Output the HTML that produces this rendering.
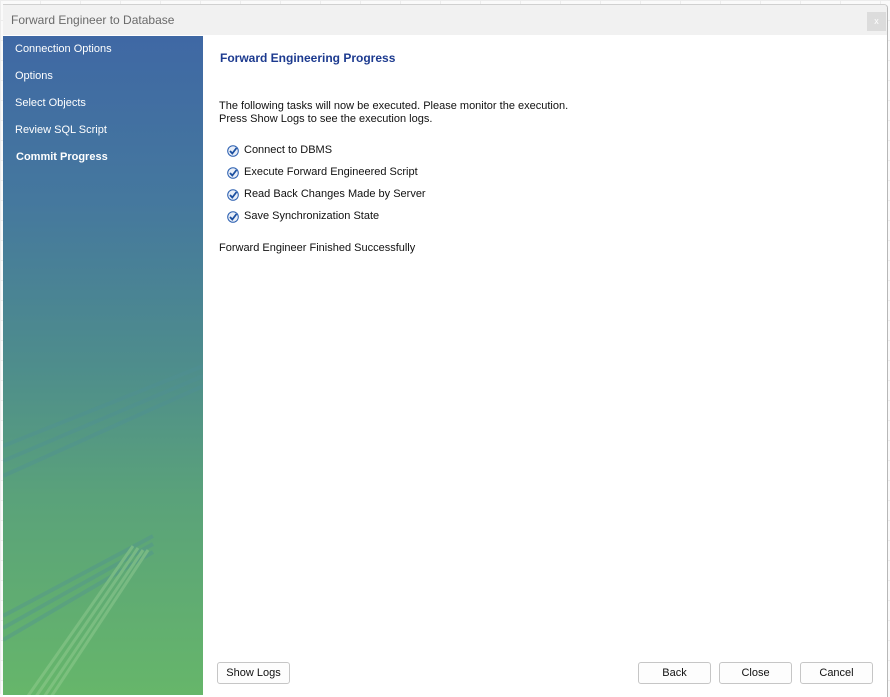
<!DOCTYPE html>
<html><head><style>
body{margin:0;width:890px;height:694px;overflow:hidden;background:#fafafa;font-family:"Liberation Sans",Tahoma,sans-serif;font-size:11px;position:relative}
.grid{position:absolute;inset:0;background-image:linear-gradient(#ececec 1px,transparent 1px),linear-gradient(90deg,#ececec 1px,transparent 1px);background-size:40px 20px}
.win{position:absolute;left:3px;top:4px;width:884px;height:692px;background:#fff;border-right:1px solid #b8b8b8;border-top:1px solid #d0d0d0;border-radius:0 4px 0 0;overflow:hidden}
.title{height:30px;background:#f1f1f1;color:#6a6a6a;font-size:12px;line-height:31px;padding-left:8px}
.x{position:absolute;right:1px;top:7px;width:19px;height:19px;background:#dcdcdc;color:#fff;font-size:9px;text-align:center;line-height:19px}
.side{position:absolute;left:0;top:31px;width:200px;height:659px;background:linear-gradient(180deg,#3f68a4 0%,#45789e 25%,#4e8d8c 50%,#5aa27a 70%,#66b66a 100%)}
.side div{color:#fff;position:absolute;left:12px;font-size:11px}
.main{position:absolute;left:200px;top:31px;right:0;bottom:0}
h1{position:absolute;left:17px;top:15px;margin:0;font-size:12px;color:#1c3a8f;font-weight:bold}
.t{position:absolute;left:16px;color:#111;font-size:11px}
.ck{position:absolute;left:24px;width:12px;height:12px}
.btn{position:absolute;top:626px;width:71px;height:20px;border:1px solid #c6c6c6;border-radius:3px;background:#fdfdfd;text-align:center;line-height:20px;color:#111}
</style></head><body>
<div class="grid"></div>
<div class="win">
<div class="title">Forward Engineer to Database</div>
<div class="x">x</div>
<div class="side">
<div style="top:7px">Connection Options</div>
<div style="top:34px">Options</div>
<div style="top:61px">Select Objects</div>
<div style="top:88px">Review SQL Script</div>
<div style="top:115px;font-weight:bold;left:13px">Commit Progress</div>
<svg width="200" height="659" style="position:absolute;left:0;top:0;opacity:.35">
<g stroke="#4f8f98" stroke-width="4" fill="none">
<path d="M0 410 L200 330"/><path d="M0 425 L200 340"/><path d="M0 440 L200 350"/>
<path d="M0 580 L150 500"/><path d="M0 592 L150 508"/><path d="M0 604 L150 516"/>
</g>
<g stroke="#a8d8a0" stroke-width="3" fill="none">
<path d="M25 660 L130 510"/><path d="M32 662 L135 512"/><path d="M39 664 L140 514"/><path d="M46 664 L145 514"/>
</g></svg>
</div>
<div class="main">
<h1>Forward Engineering Progress</h1>
<div class="t" style="top:64px">The following tasks will now be executed. Please monitor the execution.</div>
<div class="t" style="top:77px">Press Show Logs to see the execution logs.</div>
<svg class="ck" style="top:109px" viewBox="0 0 12 12"><circle cx="6" cy="6" r="5.3" fill="#e8eef8" stroke="#2b5fb0"/><path d="M3 6 L5.3 8.5 L9.5 3" stroke="#1b4fa0" stroke-width="1.8" fill="none"/></svg>
<div class="t" style="top:108px;left:41px">Connect to DBMS</div>
<svg class="ck" style="top:131px" viewBox="0 0 12 12"><circle cx="6" cy="6" r="5.3" fill="#e8eef8" stroke="#2b5fb0"/><path d="M3 6 L5.3 8.5 L9.5 3" stroke="#1b4fa0" stroke-width="1.8" fill="none"/></svg>
<div class="t" style="top:130px;left:41px">Execute Forward Engineered Script</div>
<svg class="ck" style="top:153px" viewBox="0 0 12 12"><circle cx="6" cy="6" r="5.3" fill="#e8eef8" stroke="#2b5fb0"/><path d="M3 6 L5.3 8.5 L9.5 3" stroke="#1b4fa0" stroke-width="1.8" fill="none"/></svg>
<div class="t" style="top:152px;left:41px">Read Back Changes Made by Server</div>
<svg class="ck" style="top:175px" viewBox="0 0 12 12"><circle cx="6" cy="6" r="5.3" fill="#e8eef8" stroke="#2b5fb0"/><path d="M3 6 L5.3 8.5 L9.5 3" stroke="#1b4fa0" stroke-width="1.8" fill="none"/></svg>
<div class="t" style="top:174px;left:41px">Save Synchronization State</div>
<div class="t" style="top:206px">Forward Engineer Finished Successfully</div>
<div class="btn" style="left:14px">Show Logs</div>
<div class="btn" style="left:435px">Back</div>
<div class="btn" style="left:516px">Close</div>
<div class="btn" style="left:597px">Cancel</div>
</div>
</div>
</body></html>
